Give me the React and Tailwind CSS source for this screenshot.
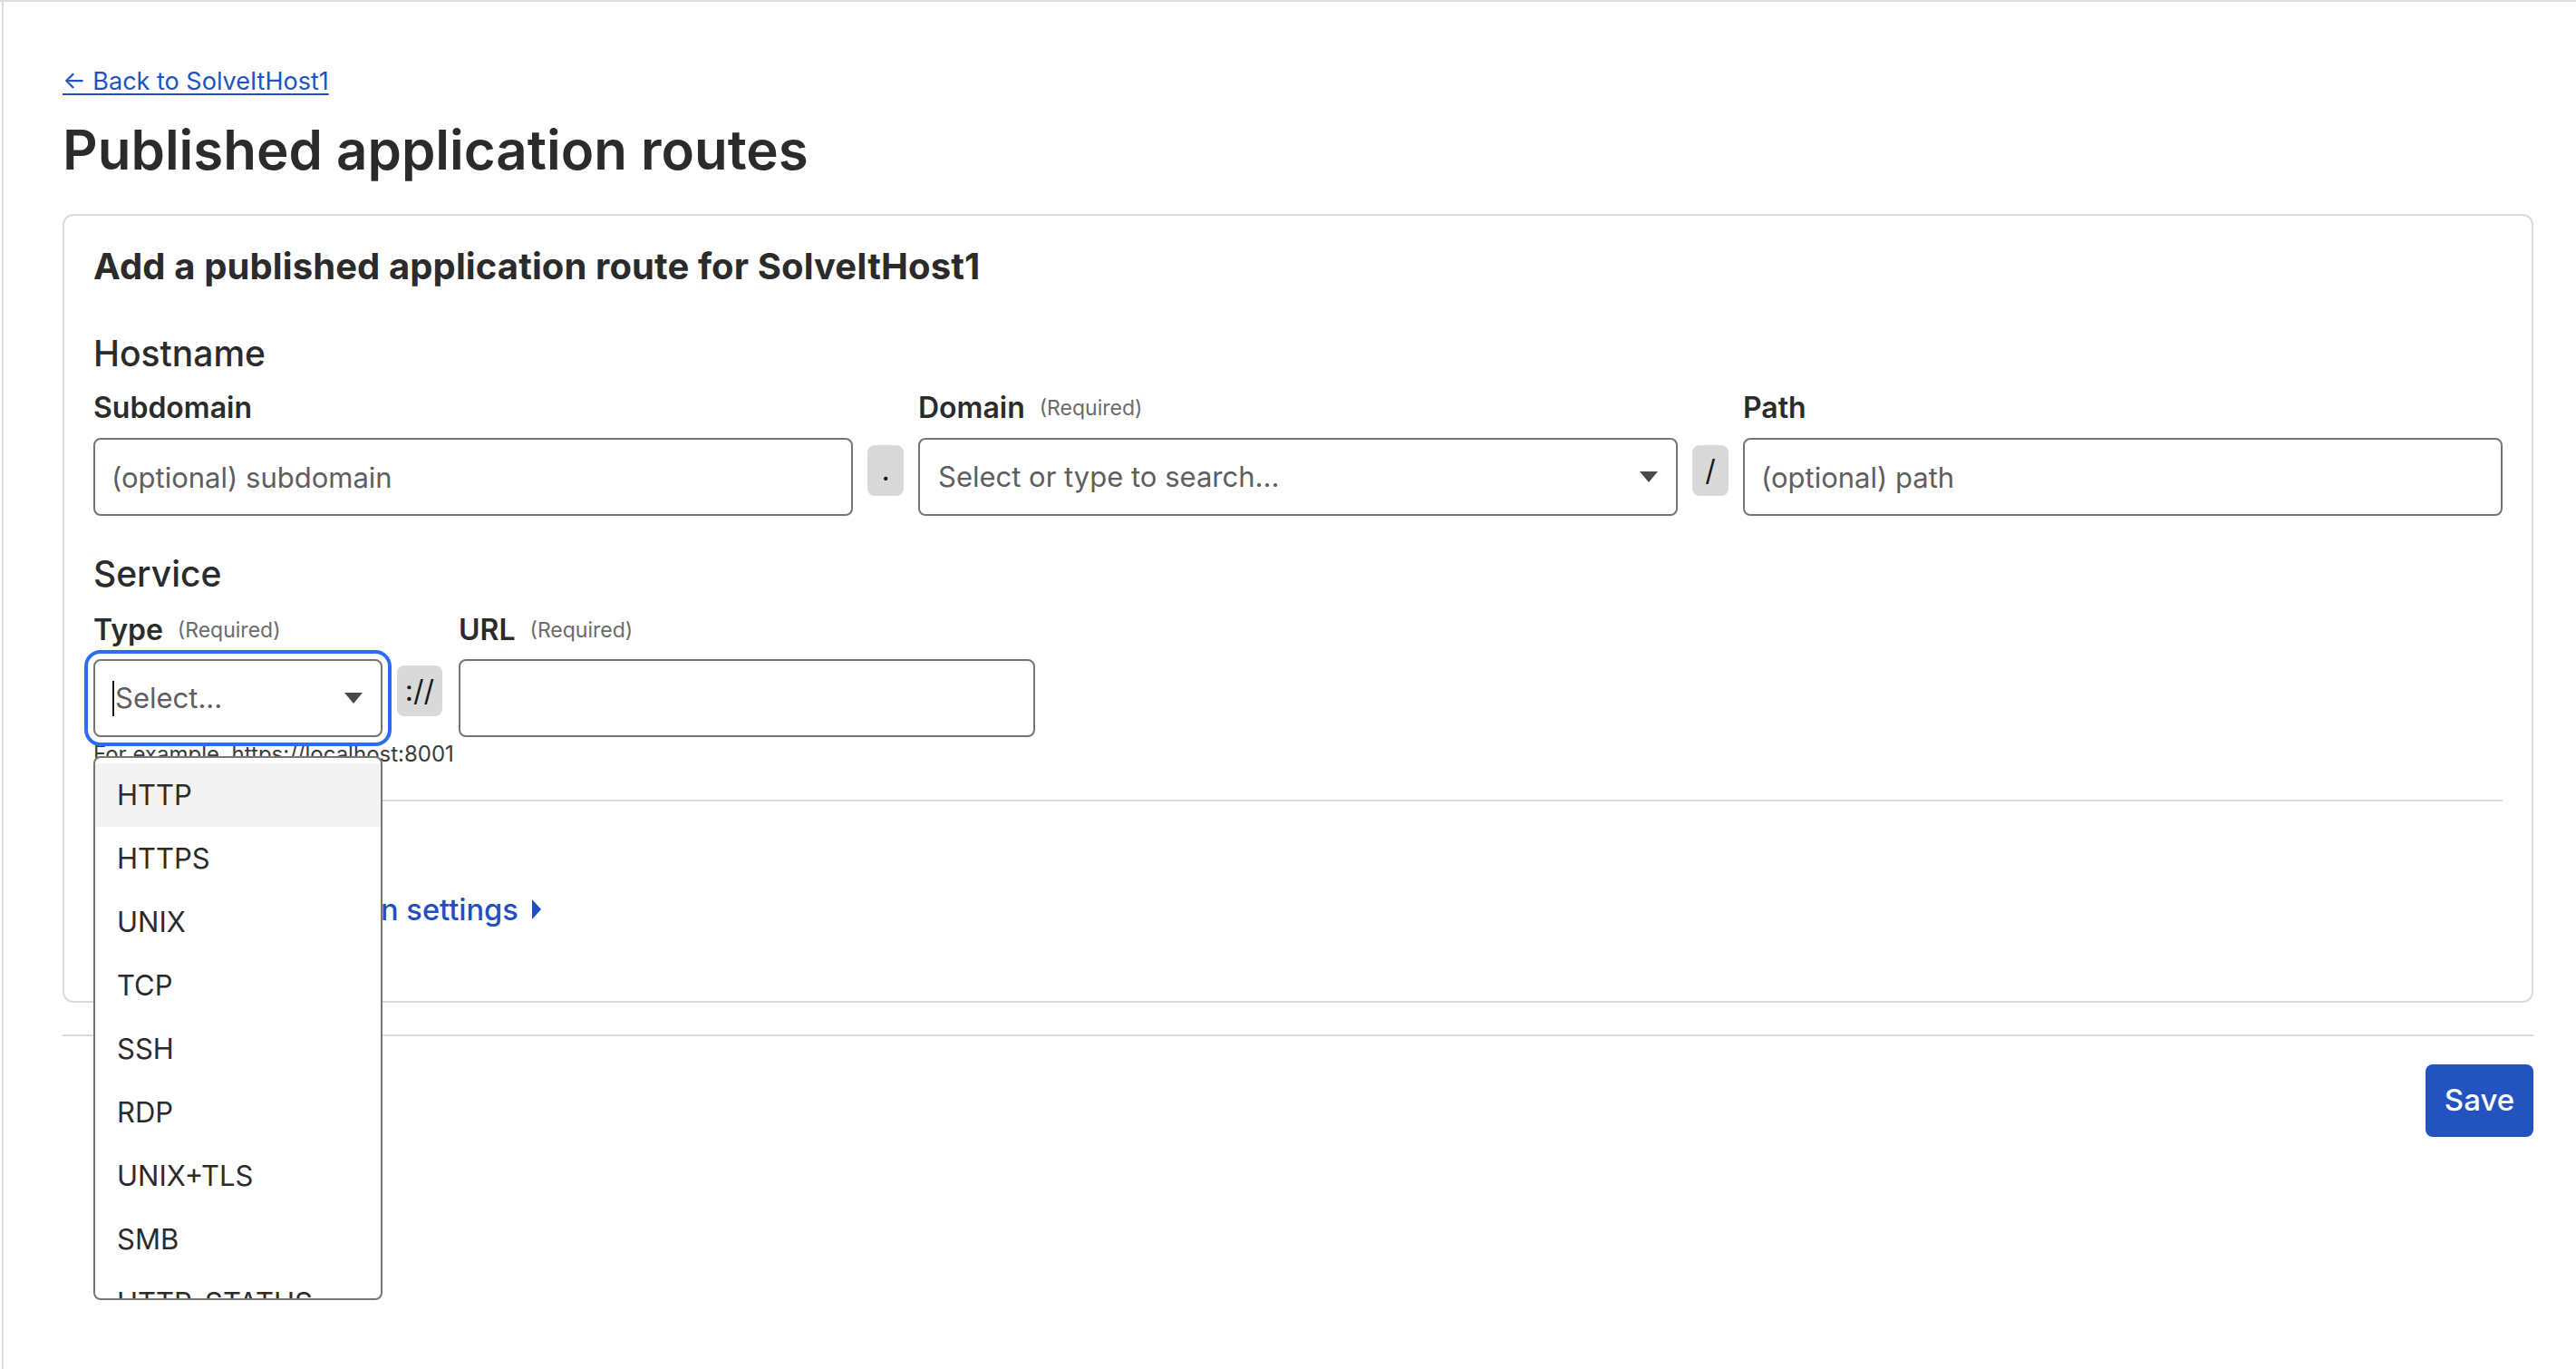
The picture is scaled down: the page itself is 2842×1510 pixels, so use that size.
const TYPES = ["HTTP", "HTTPS", "UNIX", "TCP", "SSH", "RDP", "UNIX+TLS", "SMB", "HTTP_STATUS", "BASTION"];

function Caret({ className }) {
  return (
    <svg className={className} width="20" height="12" viewBox="0 0 20 12">
      <path d="M0 0 H20 L10 12 Z" fill="#4a4a4a" />
    </svg>
  );
}

function Label({ children, required }) {
  return (
    <div className="flex items-center h-[40px] text-[32px] leading-[40px] font-semibold text-[#2b2b2b]">
      {children}
      {required && <span className="ml-[16px] text-[23px] font-normal text-[#6b6b6b]">(Required)</span>}
    </div>
  );
}

function Sep({ children, w = "w-[40px]", top = "mt-[61px]" }) {
  return (
    <div className={`${top} ${w} h-[56px] shrink-0 rounded-[8px] bg-[#d9d9d9] flex items-center justify-center text-[32px] text-[#1a1a1a]`}>
      {children}
    </div>
  );
}

export default function App() {
  return (
    <div className="min-h-[1510px] border-t-2 border-[#dcdcdc] pl-[2px] font-['Inter','Noto_Sans',sans-serif] text-[#2b2b2b] bg-white">
      <div className="min-h-[1508px] border-l-2 border-[#dcdcdc] pl-[65px] pr-[47px] pt-[68px]">
        <a href="#" className="block w-fit text-[27px] leading-[40px] text-[#2152c3] underline underline-offset-[4px]">
          ← Back to SolveItHost1
        </a>
        <h1 className="mt-[21px] text-[60px] leading-[68px] font-semibold text-[#2b2b2b]">
          Published application routes
        </h1>

        <div className="mt-[37px] rounded-[12px] border-2 border-[#dadada] px-[32px] pt-[32px] pb-[81px]">
          <h2 className="text-[40px] leading-[48px] font-bold tracking-[0.1px]">
            Add a published application route for SolveItHost1
          </h2>

          <h3 className="mt-[46px] text-[39px] leading-[52px] font-medium">Hostname</h3>
          <div className="mt-[14px] flex items-start gap-[16px]">
            <div className="flex-1">
              <Label>Subdomain</Label>
              <input
                placeholder="(optional) subdomain"
                className="mt-[13px] w-full h-[86px] rounded-[8px] border-2 border-[#757575] px-[18px] text-[31px] outline-none placeholder:text-[#5e5e5e]"
              />
            </div>
            <Sep>.</Sep>
            <div className="flex-1">
              <Label required>Domain</Label>
              <div className="mt-[13px] h-[86px] rounded-[8px] border-2 border-[#757575] pl-[20px] pr-[20px] flex items-center justify-between text-[31px] text-[#5e5e5e]">
                <span>Select or type to search...</span>
                <Caret />
              </div>
            </div>
            <Sep>/</Sep>
            <div className="flex-1">
              <Label>Path</Label>
              <input
                placeholder="(optional) path"
                className="mt-[13px] w-full h-[86px] rounded-[8px] border-2 border-[#757575] px-[18px] text-[31px] outline-none placeholder:text-[#5e5e5e]"
              />
            </div>
          </div>

          <h3 className="mt-[38px] text-[39px] leading-[52px] font-medium">Service</h3>
          <div className="mt-[16px] flex items-start">
            <div className="relative w-[319px] shrink-0">
              <Label required>Type</Label>
              <div className="mt-[12px] h-[86px] rounded-[8px] border-2 border-[#757575] outline-4 outline-offset-[6px] outline-[#2c6cf3] pl-[19px] pr-[20px] flex items-center justify-between text-[31px] text-[#5e5e5e]">
                <span className="flex items-center">
                  <span className="mr-[1px] h-[39px] w-[2px] bg-[#1a1a1a]" />
                  Select...
                </span>
                <Caret />
              </div>
              <div className="absolute left-0 top-[159px] z-10 w-[319px] h-[600px] overflow-hidden rounded-[8px] border-2 border-[#767676] bg-white pt-[6px]">
                {TYPES.map((t, i) => (
                  <div
                    key={t}
                    className={`h-[70px] flex items-center pl-[24px] text-[31px] text-[#2b2b2b] ${i === 0 ? "bg-[#f2f2f2]" : ""}`}
                  >
                    {t}
                  </div>
                ))}
              </div>
            </div>
            <Sep w="w-[50px]" top="mt-[59px] ml-[16px] h-[55px]">://</Sep>
            <div className="ml-[18px] w-[636px] shrink-0">
              <Label required>URL</Label>
              <input className="mt-[12px] w-full h-[86px] rounded-[8px] border-2 border-[#757575] px-[18px] text-[31px] outline-none" />
            </div>
          </div>
          <p className="mt-[5px] text-[24px] leading-[28px] text-[#3a3a3a]">For example, https://localhost:8001</p>

          <div className="mt-[36px] h-[2px] bg-[#dadada]" />

          <a href="#" className="mt-[99px] flex w-fit items-center gap-[15px] text-[32.6px] leading-[40px] font-medium text-[#1f4fc1]">
            Additional application settings
            <svg width="10" height="22" viewBox="0 0 10 22">
              <path d="M0 0 L10 11 L0 22 Z" fill="#1f4fc1" />
            </svg>
          </a>
        </div>

        <div className="mt-[35px] h-[2px] bg-[#dadada]" />
        <div className="mt-[31px] flex justify-end">
          <button className="w-[119px] h-[80px] rounded-[8px] bg-[#2353be] text-white text-[33px] font-medium">Save</button>
        </div>
      </div>
    </div>
  );
}
